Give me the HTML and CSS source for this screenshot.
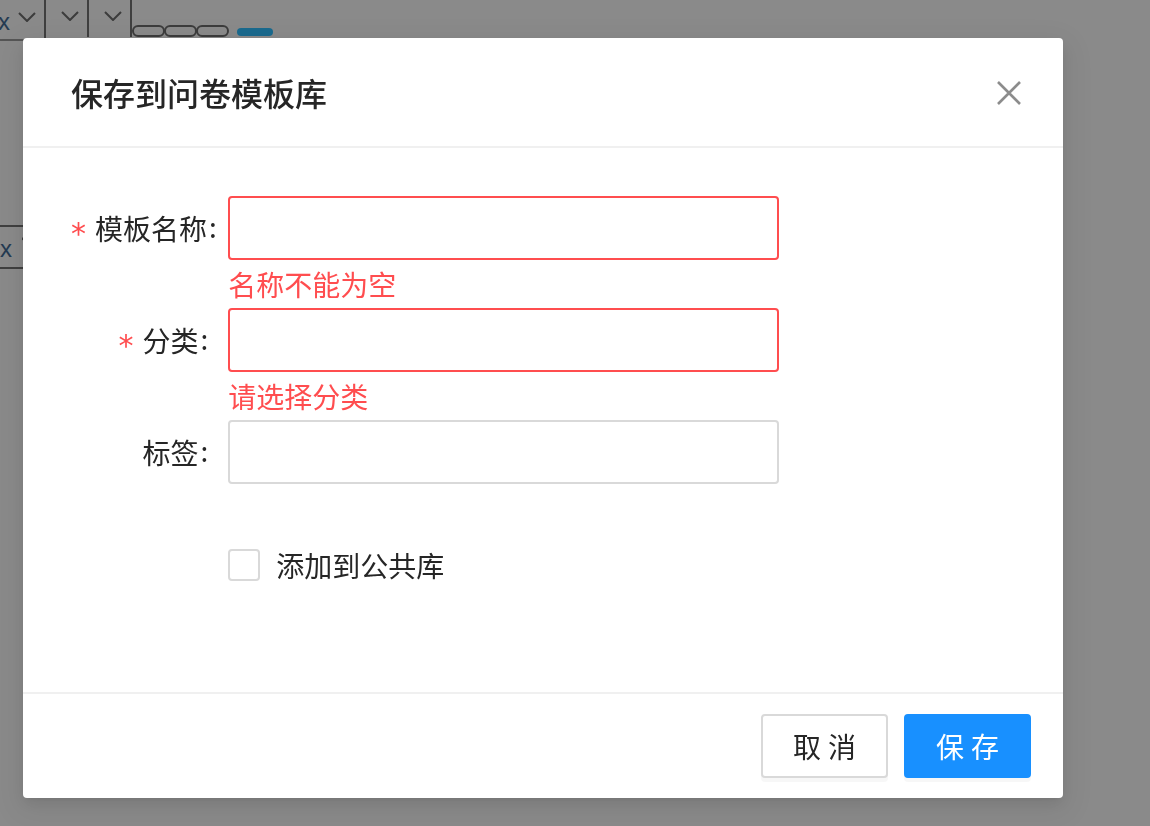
FILE: index.html
```html
<!DOCTYPE html>
<html lang="zh-CN">
<head>
<meta charset="utf-8">
<title>保存到问卷模板库</title>
<link rel="stylesheet" href="styles.css">
</head>
<body>
<div class="page">
  <div class="toolbar">
    <div class="sel sel-first">
      <span class="sel-text">x</span>
      <svg class="chev" width="18" height="10" viewBox="0 0 18 10"><path d="M1 1 L9 9 L17 1" fill="none" stroke="#3c3c3c" stroke-width="2"/></svg>
    </div>
    <div class="sel">
      <svg class="chev" width="18" height="10" viewBox="0 0 18 10"><path d="M1 1 L9 9 L17 1" fill="none" stroke="#3c3c3c" stroke-width="2"/></svg>
    </div>
    <div class="sel">
      <svg class="chev" width="18" height="10" viewBox="0 0 18 10"><path d="M1 1 L9 9 L17 1" fill="none" stroke="#3c3c3c" stroke-width="2"/></svg>
    </div>
    <div class="pills">
      <span class="pill"></span><span class="pill"></span><span class="pill"></span>
    </div>
    <span class="pill-blue"></span>
  </div>
  <div class="row-two">
    <div class="sel2">
      <span class="sel-text">x</span>
      <svg class="chev2" width="8" height="8" viewBox="0 0 8 8"><path d="M0 1 L5 6" fill="none" stroke="#3c3c3c" stroke-width="2"/></svg>
    </div>
  </div>
</div>

<div class="modal-wrap">
  <div class="modal">
    <div class="modal-header">
      <div class="modal-title">保存到问卷模板库</div>
      <button class="modal-close" aria-label="Close">
        <svg width="24" height="24" viewBox="0 0 24 24"><path d="M1 1 L23 23 M23 1 L1 23" stroke="#8c8c8c" stroke-width="2.6" fill="none"/></svg>
      </button>
    </div>
    <div class="modal-body">
      <div class="form-item has-error">
        <div class="form-label"><span class="req">*</span>模板名称<span class="colon">:</span></div>
        <div class="form-control">
          <div class="input input-error"></div>
          <div class="explain">名称不能为空</div>
        </div>
      </div>
      <div class="form-item has-error">
        <div class="form-label"><span class="req">*</span>分类<span class="colon">:</span></div>
        <div class="form-control">
          <div class="input input-error"></div>
          <div class="explain">请选择分类</div>
        </div>
      </div>
      <div class="form-item">
        <div class="form-label">标签<span class="colon">:</span></div>
        <div class="form-control">
          <div class="input"></div>
        </div>
      </div>
      <div class="form-item check-item">
        <label class="checkbox-wrap">
          <span class="checkbox"></span>
          <span class="checkbox-label">添加到公共库</span>
        </label>
      </div>
    </div>
    <div class="modal-footer">
      <button class="btn"><span class="two">取消</span></button>
      <button class="btn btn-primary"><span class="two">保存</span></button>
    </div>
  </div>
</div>
</body>
</html>
```

FILE: styles.css
```css
* { box-sizing: border-box; }

html, body {
  margin: 0;
  padding: 0;
  height: 100%;
}

body {
  background: #8a8a8a;
  font-family: "Noto Sans CJK SC", "Noto Sans", sans-serif;
  color: #262626;
  overflow: hidden;
}

/* background page fragments (seen through mask) */
.page {
  position: relative;
  height: 100%;
}

.toolbar {
  display: flex;
  align-items: flex-start;
  margin-left: -2px;
}

.sel {
  width: 43px;
  height: 37px;
  border-right: 2px solid #3f3f3f;
  display: flex;
  align-items: center;
  justify-content: flex-end;
  padding-right: 8px;
  padding-bottom: 6px;
}

.sel-first {
  width: 48px;
  height: 41px;
  border-bottom: 2px solid #555;
  justify-content: space-between;
  padding-left: 0;
  padding-right: 8px;
}

.sel-text {
  font-family: "Liberation Sans", sans-serif;
  font-size: 24px;
  color: #243a52;
  line-height: 1;
  margin-top: 10px;
}

.chev { display: block; }

.pills {
  display: flex;
  margin-top: 25px;
}

.pill {
  width: 33px;
  height: 12px;
  border: 2px solid #3c3c3c;
  border-radius: 6px;
  margin-right: -1px;
}

.pill-blue {
  width: 36px;
  height: 8px;
  border-radius: 4px;
  background: #1a6a8e;
  margin-left: 9px;
  margin-top: 28px;
}

.row-two {
  margin-top: 184px;
}

.sel2 {
  width: 24px;
  height: 44px;
  border-top: 2px solid #3f3f3f;
  border-bottom: 2px solid #3f3f3f;
  display: flex;
  align-items: center;
  gap: 10px;
  overflow: hidden;
}

.sel2 .sel-text { margin-top: 4px; }

.chev2 {
  display: block;
  flex: none;
  margin-top: -12px;
}

/* modal */
.modal-wrap {
  position: fixed;
  inset: 0;
  padding: 38px 0 0 23px;
}

.modal {
  width: 1040px;
  background: #fff;
  border-radius: 4px;
  box-shadow: 0 6px 16px rgba(0,0,0,0.08), 0 3px 6px -4px rgba(0,0,0,0.12), 0 9px 28px 8px rgba(0,0,0,0.05);
  position: relative;
}

.modal-header {
  padding: 32px 48px;
  border-bottom: 2px solid #f0f0f0;
}

.modal-title {
  font-size: 32px;
  line-height: 44px;
  font-weight: 500;
  color: #262626;
}

.modal-close {
  position: absolute;
  top: 0;
  right: 0;
  width: 108px;
  height: 110px;
  border: 0;
  background: none;
  padding: 0;
  display: flex;
  align-items: center;
  justify-content: center;
  cursor: pointer;
}

.modal-body {
  padding: 48px;
}

.form-item {
  display: flex;
  margin-bottom: 48px;
  font-size: 28px;
}

.form-item.has-error { margin-bottom: 0; }

.form-label {
  width: 157.33px;
  flex: none;
  text-align: right;
  height: 64px;
  line-height: 64px;
  white-space: nowrap;
  color: #262626;
}

.req {
  color: #ff4d4f;
  font-family: "DejaVu Sans", sans-serif;
  font-size: 30px;
  margin-right: 9px;
  position: relative;
  top: 4px;
}

.colon {
  margin: 0 20px 0 2px;
  position: relative;
  top: -2px;
}

.form-control {
  width: 550.67px;
}

.input {
  height: 64px;
  border: 2px solid #d9d9d9;
  border-radius: 4px;
  background: #fff;
}

.input-error { border-color: #ff4d4f; }

.explain {
  color: #ff4d4f;
  font-size: 28px;
  line-height: 48px;
  height: 48px;
}

.check-item {
  padding-left: 157.33px;
  height: 64px;
  align-items: center;
}

.checkbox-wrap {
  display: flex;
  align-items: center;
  cursor: pointer;
  margin-top: 2px;
}

.checkbox {
  width: 32px;
  height: 32px;
  border: 2px solid #d9d9d9;
  border-radius: 4px;
  background: #fff;
}

.checkbox-label {
  padding-left: 16px;
  font-size: 28px;
  line-height: 44px;
  color: #262626;
}

.modal-footer {
  border-top: 2px solid #f0f0f0;
  padding: 20px 32px;
  display: flex;
  justify-content: flex-end;
  gap: 16px;
}

.btn {
  height: 64px;
  padding: 8px 30px;
  font-family: "Noto Sans CJK SC", sans-serif;
  font-size: 28px;
  line-height: 44px;
  white-space: nowrap;
  border: 2px solid #d9d9d9;
  border-radius: 4px;
  background: #fff;
  color: #262626;
  box-shadow: 0 4px 0 rgba(0,0,0,0.03);
  cursor: pointer;
}

.btn-primary {
  background: #1890ff;
  border-color: #1890ff;
  color: #fff;
}

.two {
  letter-spacing: 0.25em;
  margin-right: -0.25em;
}
```
